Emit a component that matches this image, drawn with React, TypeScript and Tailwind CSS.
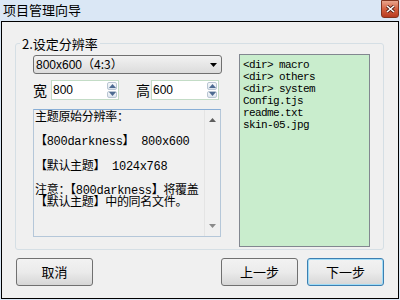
import React from "react";

const cjk = { fontFamily: '"Noto Sans CJK SC", "Liberation Sans", sans-serif' };

function Spin() {
  return (
    <div className="flex w-[11px] flex-col gap-[1px] py-[1px] pr-[1px]">
      {["up", "down"].map((d) => (
        <div
          key={d}
          className="flex flex-1 items-center justify-center rounded-[2px] border border-[#b9c6d3] bg-gradient-to-b from-[#f7f9fb] to-[#dde5ee]"
        >
          <svg width="7" height="4" viewBox="0 0 7 4">
            {d === "up" ? (
              <path d="M0 4 L3.5 0 L7 4 Z" fill="#4d6b91" />
            ) : (
              <path d="M0 0 L3.5 4 L7 0 Z" fill="#4d6b91" />
            )}
          </svg>
        </div>
      ))}
    </div>
  );
}

function NumberBox({ value }: { value: string }) {
  return (
    <div className="flex h-[20px] w-[68px] border border-[#c3dcc6] bg-white">
      <div className="flex-1 pl-[1px] text-[12px] leading-[18px] text-black" style={{ fontFamily: '"Liberation Sans", sans-serif' }}>
        {value}
      </div>
      <Spin />
    </div>
  );
}

function Btn({ label, focused }: { label: string; focused?: boolean }) {
  return (
    <button
      className={
        "flex h-[28px] w-[77px] items-center justify-center rounded-[3px] border bg-gradient-to-b from-[#f2f2f2] via-[#ebebeb] to-[#d6d6d6] text-[13px] text-black " +
        (focused ? "border-[#3c7fb1] shadow-[inset_0_0_0_1px_#9fdcf7]" : "border-[#707070]")
      }
      style={cjk}
    >
      {label}
    </button>
  );
}

export default function App() {
  const files = ["<dir> macro", "<dir> others", "<dir> system", "Config.tjs", "readme.txt", "skin-05.jpg"];

  return (
    <div className="flex h-[300px] w-[400px] flex-col bg-[#dae7f5]" style={cjk}>
      {/* title bar */}
      <div className="flex h-[21px] shrink-0 items-start justify-between">
        <div className="pl-[3px] pt-[1px] text-[13px] leading-[18px] text-black">项目管理向导</div>
        <div className="mr-[1px] flex h-[18px] w-[18px] items-center justify-center rounded-b-[3px] border border-[#83351f] bg-gradient-to-b from-[#e9a58c] via-[#d4603f] to-[#b83b20]">
          <svg width="9" height="8" viewBox="0 0 9 8">
            <path d="M1 1 L8 7 M8 1 L1 7" stroke="#4a1a10" strokeWidth="3" />
            <path d="M1 1 L8 7 M8 1 L1 7" stroke="#ffffff" strokeWidth="1.6" />
          </svg>
        </div>
      </div>

      {/* dialog body */}
      <div className="mx-[1px] mb-[1px] flex flex-1 flex-col border border-black bg-[#f0f0f0]">
        <fieldset className="ml-[13px] mr-[14px] mt-[13px] h-[215px] rounded-[3px] border border-[#d5dfe5] pb-[1px] pl-[17px] pr-[13px]">
          <legend className="-ml-[13px] px-[2px] text-[13px] leading-[17px] text-black">2.设定分辨率</legend>
          <div className="flex items-start justify-between">
            {/* left column */}
            <div className="mt-[3px] flex w-[189px] flex-col">
              <div className="flex h-[19px] items-center justify-between rounded-[3px] border border-[#707070] bg-gradient-to-b from-[#f2f2f2] to-[#dcdcdc] pl-[2px] pr-[4px]">
                <span className="text-[12px] leading-[17px] text-black">
                  <span style={{ fontFamily: '"Liberation Sans", sans-serif' }}>800x600</span>（4:3）
                </span>
                <svg width="7" height="4" viewBox="0 0 7 4">
                  <path d="M0 0 L7 0 L3.5 4 Z" fill="#000" />
                </svg>
              </div>

              <div className="mt-[6px] flex h-[20px] items-center">
                <span className="w-[18px] text-[14px] leading-[20px] text-black">宽</span>
                <NumberBox value="800" />
                <span className="ml-[17px] w-[15px] text-[14px] leading-[20px] text-black">高</span>
                <NumberBox value="600" />
              </div>

              <div className="mt-[9px] flex h-[128px] w-[188px] border border-[#b5c7d9] border-t-[#88aed6] bg-[#f0f0f0]">
                <div
                  className="flex-1 overflow-hidden whitespace-pre pl-[1px] pt-[2px] text-[12px] leading-[12.2px] tracking-[-0.3px] text-black"
                  style={{ fontFamily: '"Liberation Mono", "Noto Sans CJK SC", monospace' }}
                >
                  {"主题原始分辨率：\n\n【800darkness】 800x600\n\n【默认主题】 1024x768\n\n注意：【800darkness】将覆盖\n【默认主题】中的同名文件。"}
                </div>
                <div className="flex w-[16px] shrink-0 flex-col items-center justify-between border-l border-[#e4e4e4] py-[8px]">
                  <svg width="7" height="4" viewBox="0 0 7 4">
                    <path d="M0 4 L3.5 0 L7 4 Z" fill="#5e5e5e" />
                  </svg>
                  <svg width="7" height="4" viewBox="0 0 7 4">
                    <path d="M0 0 L7 0 L3.5 4 Z" fill="#8a8a8a" />
                  </svg>
                </div>
              </div>
            </div>

            {/* file list */}
            <div className="mt-[2px] h-[193px] w-[131px] border border-[#828790] bg-[#c9edcd] px-[3px] pt-[4px]">
              {files.map((f) => (
                <div
                  key={f}
                  className="whitespace-pre text-[11px] leading-[12px] tracking-[-0.6px] text-black"
                  style={{ fontFamily: '"Liberation Mono", "DejaVu Sans Mono", monospace' }}
                >
                  {f}
                </div>
              ))}
            </div>
          </div>
        </fieldset>

        <div className="mt-[8px] flex items-center pl-[14px] pr-[14px]">
          <Btn label="取消" />
          <div className="flex-1" />
          <div className="flex gap-[9px]">
            <Btn label="上一步" />
            <Btn label="下一步" focused />
          </div>
        </div>
      </div>
    </div>
  );
}
